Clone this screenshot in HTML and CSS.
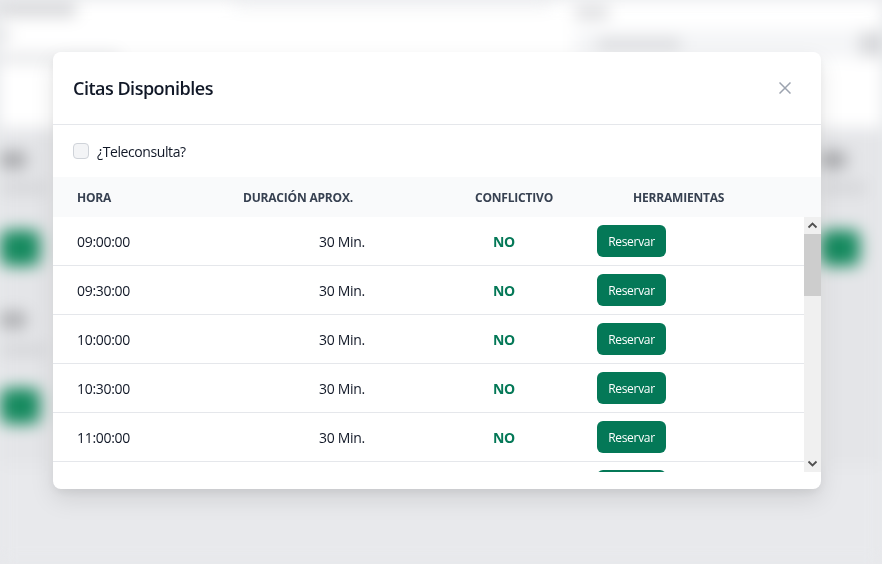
FILE: index.html
```html
<!DOCTYPE html>
<html lang="es">
<head>
<meta charset="utf-8">
<title>Citas Disponibles</title>
<link rel="stylesheet" href="styles.css">
</head>
<body>
<div class="page" aria-hidden="true">
  <div class="page-top">
    <div class="top-left">
      <span class="blob t1"></span>
      <span class="blob t2"></span>
      <span class="blob t3"></span>
    </div>
    <div class="top-mid"><span class="field"></span></div>
    <div class="top-right">
      <span class="blob t4"></span>
      <div class="search"><span class="blob t5"></span><span class="sbtn"></span></div>
    </div>
  </div>
  <div class="page-cards">
    <div class="pcard left">
      <span class="blob c1"></span>
      <span class="blob c2"></span>
      <span class="gbtn"></span>
      <span class="blob c3"></span>
      <span class="blob c4"></span>
      <span class="gbtn g2"></span>
    </div>
    <div class="pcard mid"></div>
    <div class="pcard right">
      <span class="blob c1"></span>
      <span class="blob c2"></span>
      <span class="gbtn"></span>
    </div>
  </div>
</div>

<div class="modal" role="dialog" aria-labelledby="mt">
  <header class="modal-head">
    <h2 id="mt">Citas Disponibles</h2>
    <button class="close" aria-label="Cerrar">
      <svg width="12" height="12" viewBox="0 0 12 12"><path d="M0.5 0.5L11.5 11.5M11.5 0.5L0.5 11.5" stroke="#9ca3af" stroke-width="1.5" fill="none"/></svg>
    </button>
  </header>
  <div class="modal-body">
    <label class="check"><span class="box"></span><span>¿Teleconsulta?</span></label>
    <div class="thead">
      <span>Hora</span>
      <span>Duración Aprox.</span>
      <span>Conflictivo</span>
      <span>Herramientas</span>
    </div>
    <div class="tablewrap">
      <div class="tbody">
        <div class="row"><span>09:00:00</span><span>30 Min.</span><span class="no">NO</span><span></span><span><button class="res">Reservar</button></span></div>
        <div class="row"><span>09:30:00</span><span>30 Min.</span><span class="no">NO</span><span></span><span><button class="res">Reservar</button></span></div>
        <div class="row"><span>10:00:00</span><span>30 Min.</span><span class="no">NO</span><span></span><span><button class="res">Reservar</button></span></div>
        <div class="row"><span>10:30:00</span><span>30 Min.</span><span class="no">NO</span><span></span><span><button class="res">Reservar</button></span></div>
        <div class="row"><span>11:00:00</span><span>30 Min.</span><span class="no">NO</span><span></span><span><button class="res">Reservar</button></span></div>
        <div class="row"><span></span><span></span><span></span><span></span><span><button class="res" tabindex="-1" aria-hidden="true"></button></span></div>
      </div>
      <div class="scrollbar" aria-hidden="true">
        <span class="sb-btn">
          <svg width="17" height="17" viewBox="0 0 17 17"><path d="M4.5 10.5L8.5 6.5L12.5 10.5" fill="none" stroke="#505050" stroke-width="1.8"/></svg>
        </span>
        <span class="sb-thumb"></span>
        <span class="sb-track"></span>
        <span class="sb-btn">
          <svg width="17" height="17" viewBox="0 0 17 17"><path d="M4.5 6.5L8.5 10.5L12.5 6.5" fill="none" stroke="#505050" stroke-width="1.8"/></svg>
        </span>
      </div>
    </div>
  </div>
</div>
</body>
</html>
```

FILE: styles.css
```css
* { box-sizing: border-box; }
html, body { margin: 0; padding: 0; }
body {
  width: 882px;
  height: 564px;
  overflow: hidden;
  background: #e8e9ec;
  font-family: "Open Sans", "Noto Sans", "Liberation Sans", sans-serif;
  color: #111827;
}

/* blurred page behind the dialog */
.page {
  position: fixed;
  inset: 0;
  filter: blur(8px);
  background: #e8e9ec;
}
.page-top {
  height: 128px;
  background: #fff;
  display: flex;
}
.blob { display: block; background: #c9cacd; border-radius: 3px; }
.top-left { width: 235px; display: flex; flex-direction: column; gap: 14px; padding-top: 4px; }
.t1 { width: 76px; height: 12px; background: #cfd0d3; }
.t2 { width: 10px; height: 10px; background: #d8d9dc; }
.t3 { width: 120px; height: 8px; background: #dedfe2; }
.top-mid { width: 340px; }
.field { display: block; width: 315px; height: 12px; margin-top: -4px; border: 1px solid #d9dadd; border-radius: 4px; background: #f3f4f6; }
.top-right { flex: 1; padding-top: 8px; }
.t4 { width: 34px; height: 10px; background: #d2d3d6; }
.search { margin-top: 12px; height: 28px; background: #f4f5f7; display: flex; align-items: center; justify-content: space-between; padding-left: 22px; }
.t5 { width: 84px; height: 8px; background: #cfd0d3; }
.sbtn { width: 22px; height: 24px; background: #d5d6d9; border-radius: 4px; }

.page-cards {
  height: 338px;
  background: #fff;
  display: grid;
  grid-template-columns: 56px 1fr 62px;
}
.pcard { display: flex; flex-direction: column; align-items: flex-start; padding-top: 24px; background: #e4e5e8; }
.pcard.mid { background: #f7f7f8; }
.c1 { width: 26px; height: 16px; background: #a2a3a6; }
.c2 { width: 46px; height: 8px; margin-top: 16px; background: #cdced1; }
.c3 { width: 26px; height: 16px; margin-top: 46px; background: #a9aaad; }
.c4 { width: 46px; height: 8px; margin-top: 18px; background: #cdced1; }
.gbtn { display: block; width: 40px; height: 36px; margin-top: 38px; border-radius: 8px; background: #168a5f; }
.gbtn.g2 { margin-top: 34px; }

/* dialog */
.modal {
  position: absolute;
  left: 53px;
  top: 52px;
  width: 768px;
  height: 437px;
  background: #fff;
  border-radius: 8px;
  box-shadow: 0 10px 25px rgba(0,0,0,0.10), 0 4px 10px rgba(0,0,0,0.06);
  overflow: hidden;
  display: flex;
  flex-direction: column;
}
.modal-head {
  height: 73px;
  flex: none;
  display: flex;
  align-items: center;
  justify-content: space-between;
  padding: 0 30px 0 20px;
  border-bottom: 1px solid #e5e7eb;
}
.modal-head h2 {
  margin: 0;
  font-size: 18px;
  font-weight: 600;
  color: #111827;
  letter-spacing: -0.5px;
}
.close {
  border: 0;
  background: none;
  padding: 0;
  width: 12px;
  height: 12px;
  display: flex;
}

.modal-body { flex: 1; display: flex; flex-direction: column; min-height: 0; padding-bottom: 17px; }

.check {
  height: 52px;
  flex: none;
  display: flex;
  align-items: center;
  gap: 8px;
  padding-left: 20px;
  font-size: 14px;
  letter-spacing: -0.4px;
  color: #111827;
}
.box {
  width: 16px;
  height: 16px;
  border: 1px solid #cfd3d9;
  border-radius: 4px;
  background: #f3f4f6;
}

.thead {
  height: 40px;
  flex: none;
  background: #f9fafb;
  display: grid;
  grid-template-columns: 166px 232px 158px auto;
  align-items: center;
  padding-left: 24px;
  font-size: 12px;
  font-weight: 700;
  letter-spacing: -0.2px;
  text-transform: uppercase;
  color: #374151;
}

.tablewrap {
  flex: 1;
  min-height: 0;
  display: flex;
}
.tbody {
  flex: 1;
  overflow: hidden;
}
.scrollbar {
  width: 17px;
  flex: none;
  display: flex;
  flex-direction: column;
  background: #f0f0f0;
}
.sb-btn { display: block; height: 17px; flex: none; }
.sb-btn svg { display: block; }
.sb-thumb { display: block; height: 62px; flex: none; background: #cdcdcd; }
.sb-track { flex: 1; }

.row {
  height: 49px;
  display: grid;
  grid-template-columns: 242px 160px 50px 68px auto;
  align-items: center;
  padding-left: 24px;
  border-bottom: 1px solid #e5e7eb;
  font-size: 14px;
  letter-spacing: -0.3px;
  color: #111827;
}
.no {
  text-align: center;
  font-weight: 700;
  color: #047857;
}
.res {
  display: block;
  width: 69px;
  height: 32px;
  border: 0;
  border-radius: 6px;
  background: #047857;
  color: #fff;
  font-family: inherit;
  font-size: 12px;
  letter-spacing: -0.3px;
  padding: 0;
}
```
